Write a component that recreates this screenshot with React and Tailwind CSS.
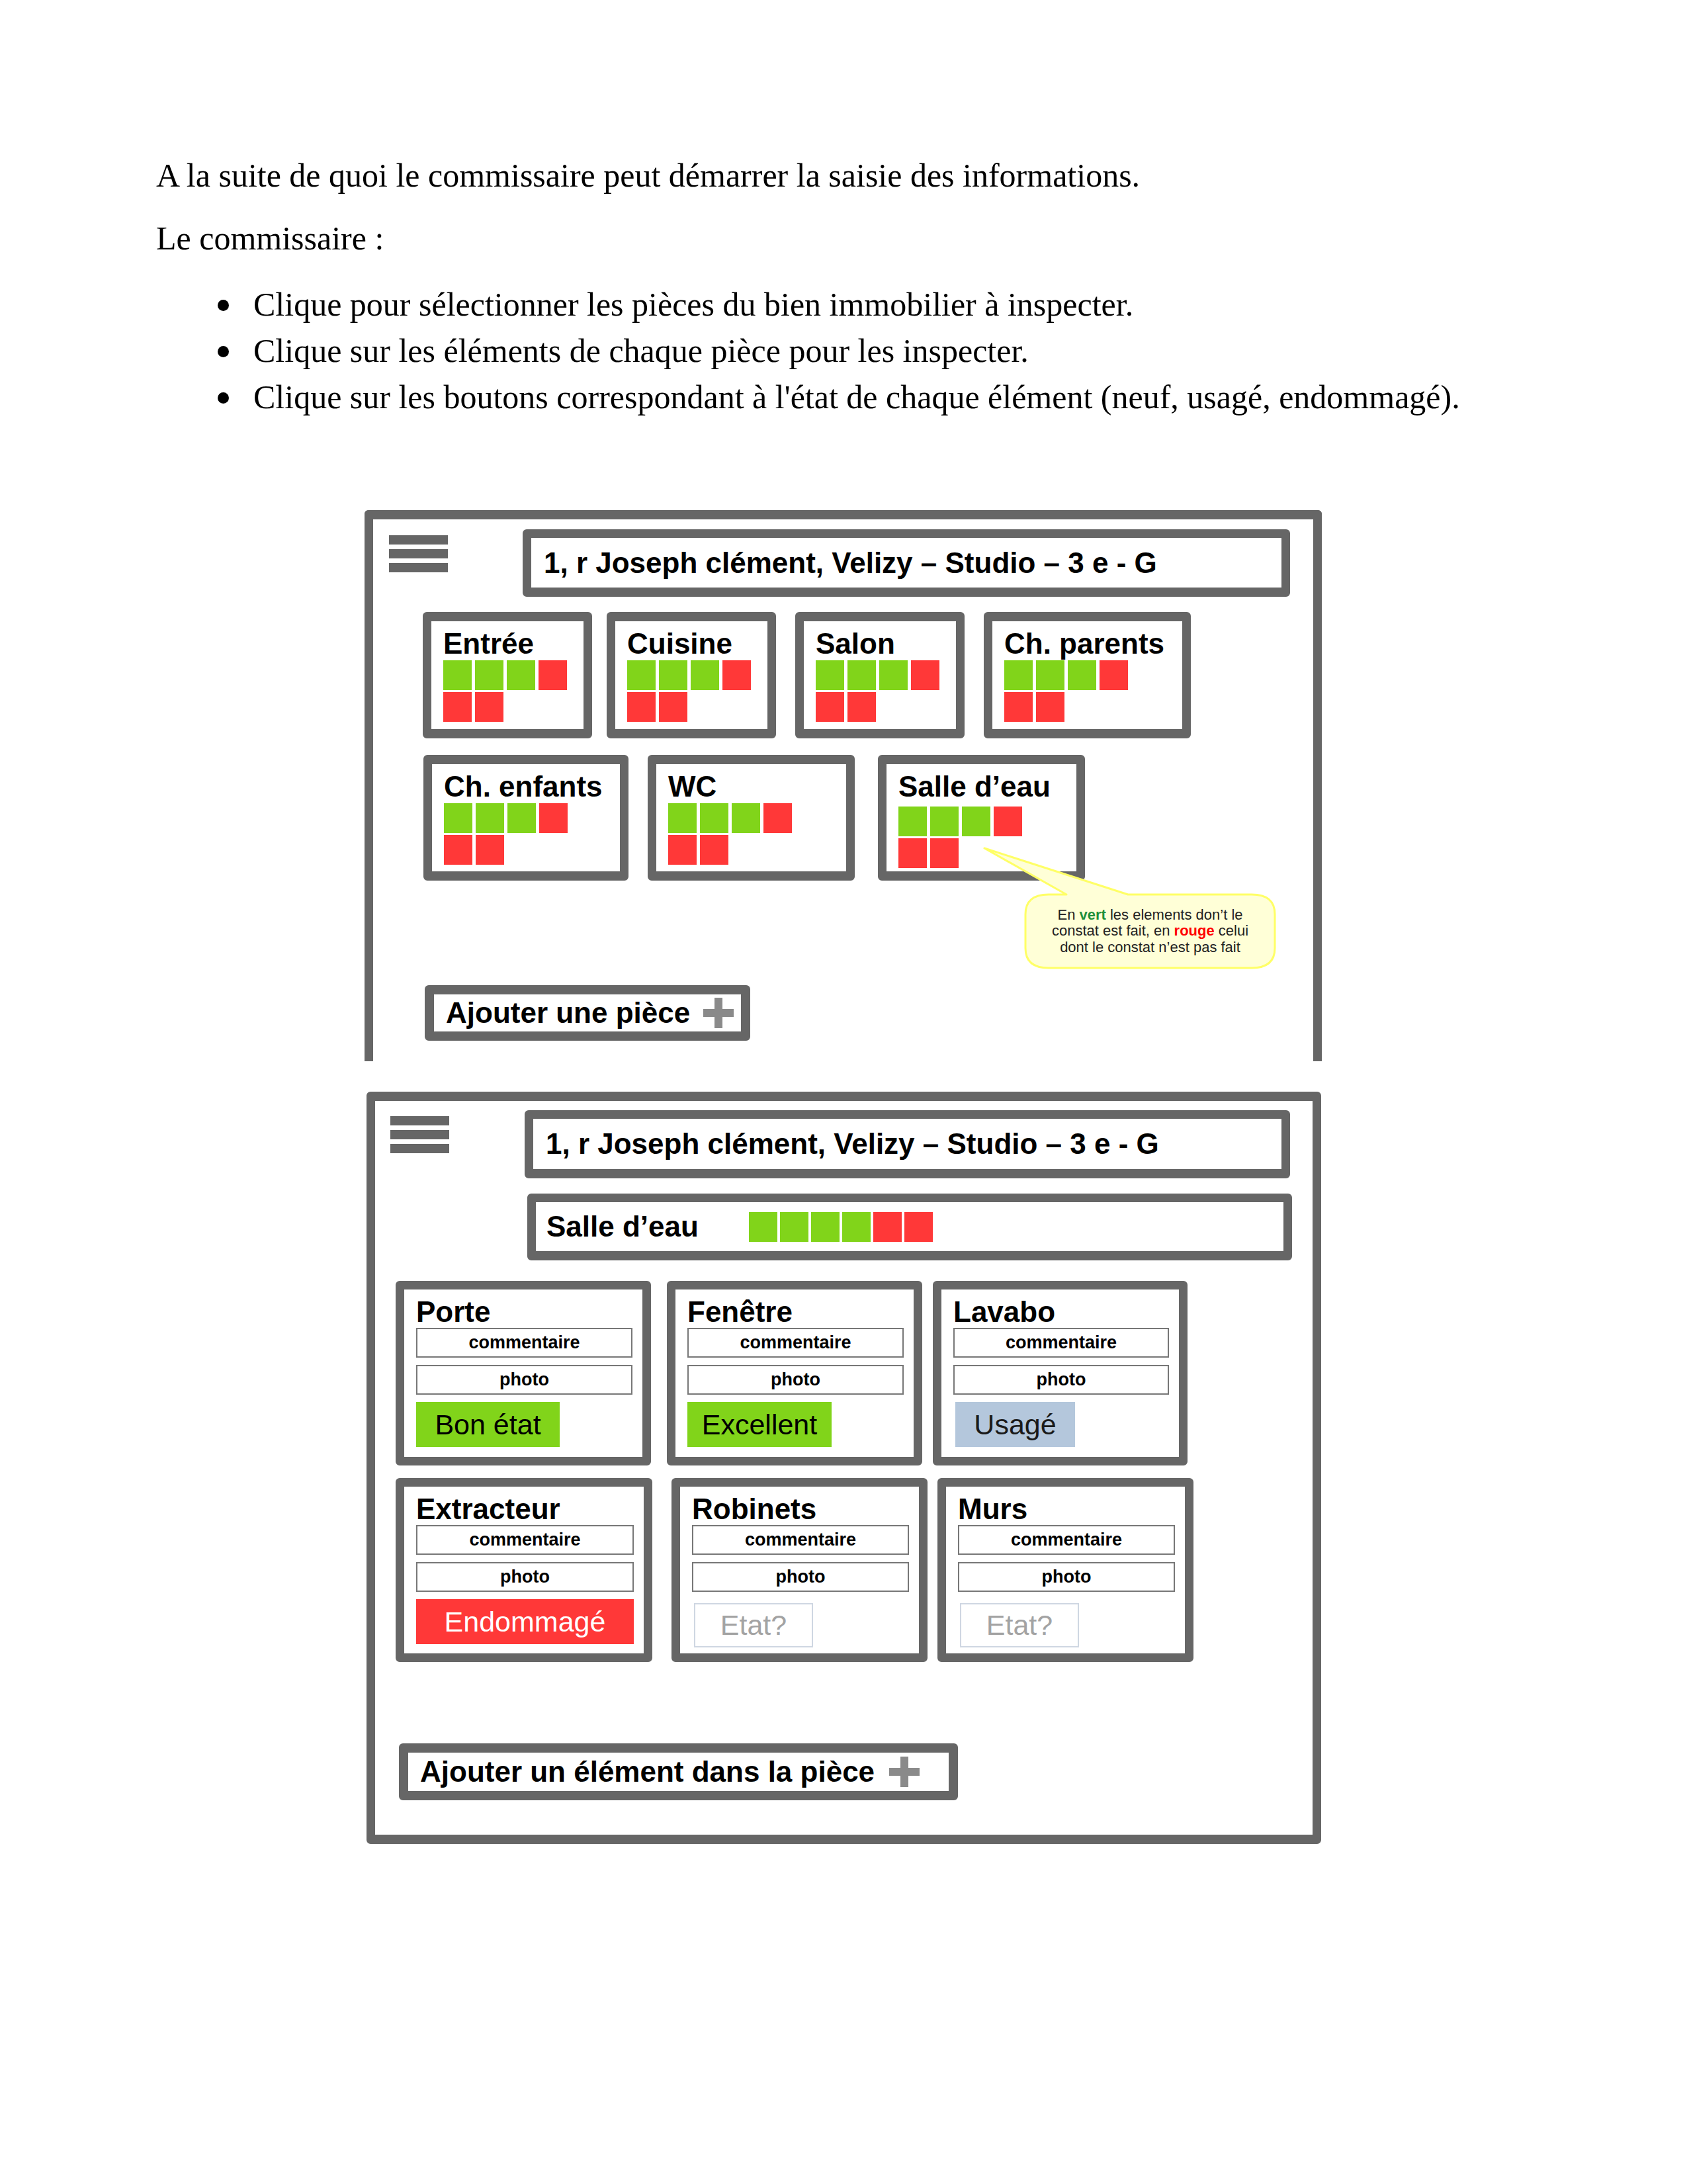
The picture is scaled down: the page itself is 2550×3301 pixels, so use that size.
import React from "react";

const G = "bg-[#81d41a]";
const R = "bg-[#ff3838]";

function Sq({ c }) {
  return <div className={`w-[43px] h-[45px] ${c === "g" ? G : R}`} />;
}

function Hamburger({ cls }) {
  return (
    <div className={`flex flex-col gap-[7px] ${cls}`}>
      <div className="w-[89px] h-[14px] bg-[#666]" />
      <div className="w-[89px] h-[14px] bg-[#666]" />
      <div className="w-[89px] h-[14px] bg-[#666]" />
    </div>
  );
}

function Plus({ cls }) {
  return (
    <div className={`relative w-[46px] h-[46px] ${cls}`}>
      <div className="absolute left-[17px] top-0 w-[12px] h-[46px] bg-[#8a8a8a]" />
      <div className="absolute left-0 top-[17px] w-[46px] h-[12px] bg-[#8a8a8a]" />
    </div>
  );
}

function RoomCard({ name, cls, sqTop = "mt-[3px]" }) {
  return (
    <div className={`shrink-0 border-[13px] border-y-[14px] border-[#666] rounded-[6px] bg-white pt-[12px] pl-[18px] ${cls}`}>
      <div className="h-[44px] leading-[44px] text-[44px] font-bold text-black whitespace-nowrap">{name}</div>
      <div className={`flex flex-col gap-[3px] ${sqTop}`}>
        <div className="flex gap-[5px]">
          <Sq c="g" />
          <Sq c="g" />
          <Sq c="g" />
          <Sq c="r" />
        </div>
        <div className="flex gap-[5px]">
          <Sq c="r" />
          <Sq c="r" />
        </div>
      </div>
    </div>
  );
}

function Field({ label, cls = "" }) {
  return (
    <div className={`h-[45px] border-2 border-[#777] bg-white flex items-center justify-center text-[27px] font-bold text-black leading-none ${cls}`}>
      {label}
    </div>
  );
}

function ItemCard({ name, cls, children }) {
  return (
    <div className={`shrink-0 border-[13px] border-[#666] rounded-[6px] bg-white pt-[12px] pl-[18px] pr-[15px] flex flex-col ${cls}`}>
      <div className="h-[44px] leading-[44px] text-[44px] font-bold text-black whitespace-nowrap">{name}</div>
      <Field label="commentaire" cls="mt-[2px]" />
      <Field label="photo" cls="mt-[11px]" />
      {children}
    </div>
  );
}

function AddressBox({ cls }) {
  return (
    <div className={`border-[13px] border-b-[14px] border-[#666] rounded-[6px] bg-white flex items-center pl-[19px] ${cls}`}>
      <span className="text-[44px] leading-[44px] font-bold text-black whitespace-nowrap">
        1, r Joseph clément, Velizy – Studio – 3 e - G
      </span>
    </div>
  );
}

function Bubble() {
  return (
    <div className="absolute left-[916px] top-[490px] w-[460px] h-[195px]">
      <svg width="460" height="195" viewBox="0 0 460 195" className="absolute left-0 top-0">
        <path
          d="M 132 77 L 8 7 L 225 77 L 412 77 Q 447 77 447 107 L 447 158 Q 447 188 412 188 L 105 188 Q 70 188 70 158 L 70 107 Q 70 77 105 77 Z"
          fill="#ffffd7"
          stroke="#ffff66"
          strokeWidth="3"
          strokeLinejoin="round"
        />
      </svg>
      <div className="absolute left-[70px] top-[77px] w-[377px] h-[111px] flex flex-col items-center justify-center text-[22px] leading-[24.5px] text-[#222] text-center">
        <div>
          En <span className="font-bold text-[#1f8f3a]">vert</span> les elements don’t le
        </div>
        <div>
          constat est fait, en <span className="font-bold text-[#ff0000]">rouge</span> celui
        </div>
        <div>dont le constat n’est pas fait</div>
      </div>
    </div>
  );
}

export default function App() {
  return (
    <div className="w-[2550px] min-h-[3301px] bg-white text-black" style={{ fontFamily: '"Liberation Sans", Arial, sans-serif' }}>
      {/* Text */}
      <div className="pt-[232px] pl-[236px] text-[50px] leading-[66px]" style={{ fontFamily: '"Liberation Serif", "Times New Roman", serif' }}>
        <p>A la suite de quoi le commissaire peut démarrer la saisie des informations.</p>
        <p className="mt-[29px]">Le commissaire :</p>
        <ul className="mt-[32px] leading-[70px]">
          {[
            "Clique pour sélectionner les pièces du bien immobilier à inspecter.",
            "Clique sur les éléments de chaque pièce pour les inspecter.",
            "Clique sur les boutons correspondant à l'état de chaque élément (neuf, usagé, endommagé).",
          ].map((t) => (
            <li key={t} className="flex items-start">
              <div className="ml-[93px] mt-[28px] w-[17px] h-[17px] rounded-full bg-black shrink-0" />
              <span className="ml-[37px] whitespace-nowrap">{t}</span>
            </li>
          ))}
        </ul>
      </div>

      {/* Frame 1 */}
      <div className="relative ml-[551px] mt-[136px] w-[1447px] h-[833px] border-t-[14px] border-x-[13px] border-[#666] rounded-t-[6px] flex flex-col">
        <div className="flex items-start pt-[15px]">
          <Hamburger cls="ml-[24px] mt-[9px]" />
          <AddressBox cls="ml-[113px] w-[1160px] h-[102px]" />
        </div>
        <div className="flex mt-[23px]">
          <RoomCard name="Entrée" cls="ml-[75px] w-[256px] h-[191px]" />
          <RoomCard name="Cuisine" cls="ml-[22px] w-[256px] h-[191px]" />
          <RoomCard name="Salon" cls="ml-[29px] w-[256px] h-[191px]" />
          <RoomCard name="Ch. parents" cls="ml-[29px] w-[313px] h-[191px]" />
        </div>
        <div className="flex mt-[25px]">
          <RoomCard name="Ch. enfants" cls="ml-[76px] w-[310px] h-[190px]" />
          <RoomCard name="WC" cls="ml-[29px] w-[313px] h-[190px]" />
          <RoomCard name="Salle d’eau" cls="ml-[35px] w-[313px] h-[190px]" sqTop="mt-[8px]" />
        </div>
        <div className="mt-[158px] ml-[78px] w-[492px] h-[84px] border-[14px] border-[#666] rounded-[6px] flex items-center pl-[18px]">
          <span className="text-[44px] leading-[44px] font-bold whitespace-nowrap">Ajouter une pièce</span>
          <Plus cls="ml-[20px]" />
        </div>
        <Bubble />
      </div>

      {/* Frame 2 */}
      <div className="ml-[554px] mt-[46px] w-[1443px] border-[13px] border-y-[14px] border-[#666] rounded-[6px] flex flex-col pb-[52px]">
        <div className="flex items-start pt-[14px]">
          <Hamburger cls="ml-[23px] mt-[9px]" />
          <AddressBox cls="ml-[114px] w-[1157px] h-[103px]" />
        </div>
        <div className="mt-[23px] ml-[230px] w-[1156px] h-[101px] border-[13px] border-b-[14px] border-[#666] rounded-[6px] flex items-center pl-[16px]">
          <span className="text-[44px] leading-[44px] font-bold whitespace-nowrap">Salle d’eau</span>
          <div className="ml-[76px] flex gap-[4px]">
            <Sq c="g" />
            <Sq c="g" />
            <Sq c="g" />
            <Sq c="g" />
            <Sq c="r" />
            <Sq c="r" />
          </div>
        </div>
        <div className="flex mt-[31px]">
          <ItemCard name="Porte" cls="ml-[31px] w-[386px] h-[279px]">
            <div className="mt-[11px] w-[217px] h-[68px] bg-[#81d41a] flex items-center justify-center text-[43px] text-black">Bon état</div>
          </ItemCard>
          <ItemCard name="Fenêtre" cls="ml-[24px] w-[386px] h-[279px]">
            <div className="mt-[11px] w-[218px] h-[68px] bg-[#81d41a] flex items-center justify-center text-[43px] text-black">Excellent</div>
          </ItemCard>
          <ItemCard name="Lavabo" cls="ml-[16px] w-[385px] h-[279px]">
            <div className="mt-[11px] ml-[3px] w-[181px] h-[68px] bg-[#b4c7dc] flex items-center justify-center text-[43px] text-[#1a1a1a]">Usagé</div>
          </ItemCard>
        </div>
        <div className="flex mt-[19px]">
          <ItemCard name="Extracteur" cls="ml-[31px] w-[388px] h-[278px]">
            <div className="mt-[11px] h-[68px] bg-[#ff3838] flex items-center justify-center text-[43px] text-white">Endommagé</div>
          </ItemCard>
          <ItemCard name="Robinets" cls="ml-[29px] w-[387px] h-[278px]">
            <div className="mt-[17px] ml-[3px] w-[180px] h-[67px] border-2 border-[#cfd7e2] bg-white flex items-center justify-center text-[43px] text-[#a3a3a3]">Etat?</div>
          </ItemCard>
          <ItemCard name="Murs" cls="ml-[15px] w-[387px] h-[278px]">
            <div className="mt-[17px] ml-[3px] w-[180px] h-[67px] border-2 border-[#cfd7e2] bg-white flex items-center justify-center text-[43px] text-[#a3a3a3]">Etat?</div>
          </ItemCard>
        </div>
        <div className="mt-[123px] ml-[36px] w-[845px] h-[86px] border-[14px] border-[#666] rounded-[6px] flex items-center pl-[18px]">
          <span className="text-[44px] leading-[44px] font-bold whitespace-nowrap">Ajouter un élément dans la pièce</span>
          <Plus cls="ml-[22px]" />
        </div>
      </div>
    </div>
  );
}
